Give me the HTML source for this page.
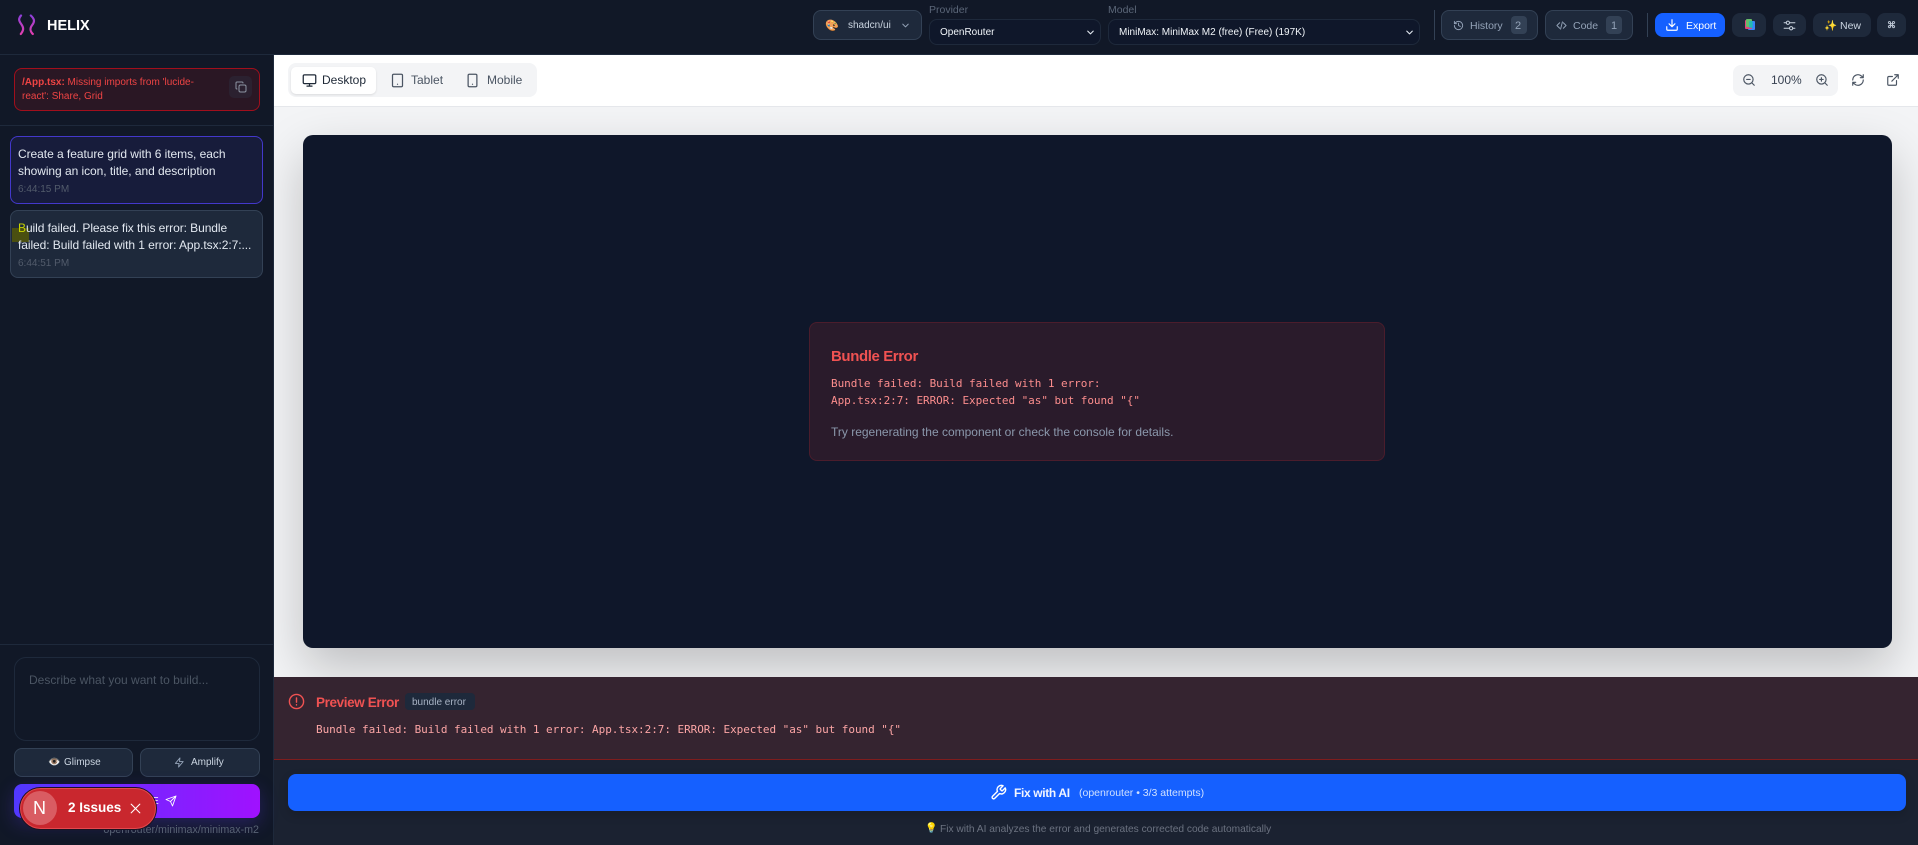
<!DOCTYPE html>
<html><head><meta charset="utf-8"><style>
*{box-sizing:border-box;margin:0;padding:0}
html,body{width:1918px;height:845px;overflow:hidden;background:#0f172a;font-family:"Liberation Sans",sans-serif}
.a{position:absolute;white-space:nowrap}
.b{position:absolute;border-radius:8px}
svg{position:absolute;fill:none;stroke:currentColor;stroke-width:2;stroke-linecap:round;stroke-linejoin:round}
.m{font-family:"DejaVu Sans Mono","Liberation Mono",monospace;font-size:11px;letter-spacing:-.05px}
</style></head><body>
<!-- main canvas -->
<div class="b" style="left:274px;top:55px;width:1644px;height:51px;background:#fff;border-radius:0"></div>
<div class="b" style="left:274px;top:106px;width:1644px;height:1px;background:#e5e7eb;border-radius:0"></div>
<div class="b" style="left:274px;top:107px;width:1644px;height:570px;background:#f3f4f6;border-radius:0;overflow:hidden">
 <div class="b" style="left:29px;top:28px;width:1589px;height:513px;background:#0f172a;border-radius:10px;box-shadow:0 20px 50px rgba(0,0,0,.22)"></div>
</div>
<!-- error card -->
<div class="b" style="left:809px;top:322px;width:576px;height:139px;background:#2a1b2b;border:1px solid #4b1d2c"></div>
<div class="a" style="left:831px;top:347px;font-size:15px;line-height:20px;font-weight:700;color:#f05252;letter-spacing:-.4px">Bundle Error</div>
<div class="a m" style="left:831px;top:375px;line-height:17px;color:#fc8d8d">Bundle failed: Build failed with 1 error:</div>
<div class="a m" style="left:831px;top:392px;line-height:17px;color:#fc8d8d">App.tsx:2:7: ERROR: Expected "as" but found "{"</div>
<div class="a" style="left:831px;top:423px;font-size:12px;line-height:18px;color:#8b98ac">Try regenerating the component or check the console for details.</div>
<!-- preview error -->
<div class="b" style="left:274px;top:677px;width:1644px;height:83px;background:#352430;border-bottom:1px solid #7f1d1d;border-radius:0"></div>
<svg style="left:288px;top:693px;color:#f05252" width="17" height="17" viewBox="0 0 24 24"><circle cx="12" cy="12" r="10"/><path d="M12 7v6M12 16.5v.5"/></svg>
<div class="a" style="left:316px;top:693px;font-size:13.5px;line-height:20px;font-weight:700;color:#f05252;letter-spacing:-.38px">Preview Error</div>
<div class="b" style="left:405px;top:693px;width:70px;height:17px;background:#1e293b;border-radius:4px"></div>
<div class="a" style="left:412px;top:694px;font-size:10px;line-height:17px;color:#a8b3c4">bundle error</div>
<div class="a m" style="left:316px;top:721px;line-height:17px;color:#fca5a5">Bundle failed: Build failed with 1 error: App.tsx:2:7: ERROR: Expected "as" but found "{"</div>
<!-- fix bar -->
<div class="b" style="left:274px;top:760px;width:1644px;height:85px;background:#1b2231;border-radius:0"></div>
<div class="b" style="left:288px;top:774px;width:1618px;height:37px;background:#1560ff;box-shadow:0 4px 10px rgba(0,0,0,.15)"></div>
<svg style="left:990px;top:784px;color:#fff" width="17" height="17" viewBox="0 0 24 24"><path d="M14.7 6.3a1 1 0 0 0 0 1.4l1.6 1.6a1 1 0 0 0 1.4 0l3.77-3.77a6 6 0 0 1-7.94 7.94l-6.91 6.91a2.12 2.12 0 0 1-3-3l6.91-6.91a6 6 0 0 1 7.94-7.94z"/></svg>
<div class="a" style="left:1014px;top:783px;font-size:12px;line-height:20px;font-weight:700;color:#f1f5ff;letter-spacing:-.35px">Fix with AI</div>
<div class="a" style="left:1079px;top:784px;font-size:10.5px;line-height:18px;color:#cfe0ff">(openrouter • 3/3 attempts)</div>
<div class="a" style="left:925px;top:821px;font-size:10px;line-height:16px">💡</div>
<div class="a" style="left:940px;top:822px;font-size:10.2px;line-height:16px;color:#6b7280">Fix with AI analyzes the error and generates corrected code automatically</div>
<!-- header -->
<div class="b" style="left:0;top:0;width:1918px;height:55px;background:#111827;border-bottom:1px solid #1e293b;border-radius:0"></div>
<svg style="left:17px;top:14px;stroke-width:2.2" width="20" height="22" viewBox="0 0 20 22"><defs><linearGradient id="g" gradientUnits="userSpaceOnUse" x1="0" y1="1" x2="0" y2="20"><stop offset="0" stop-color="#8b3fd9"/><stop offset="1" stop-color="#e23fb0"/></linearGradient></defs><path stroke="url(#g)" d="M4 1.5C1 5 2 7 4.5 10.5C7 14 6.5 16.5 3.8 20M13.8 1.5C17.5 5 18 7.5 15.2 11C12.5 14.5 13 17 15.8 20"/></svg>
<div class="a" style="left:47px;top:16px;font-size:14.5px;line-height:20px;font-weight:700;color:#fff">HELIX</div>
<div class="b" style="left:813px;top:10px;width:109px;height:30px;background:#1e293b;border:1px solid #334155;border-radius:8px"></div>
<div class="a" style="left:825px;top:18px;font-size:11px;line-height:16px">🎨</div>
<div class="a" style="left:848px;top:18px;font-size:10px;line-height:16px;color:#cbd5e1">shadcn/ui</div>
<svg style="left:900px;top:20px;color:#94a3b8" width="11" height="11" viewBox="0 0 24 24"><path d="M6 9l6 6 6-6"/></svg>
<div class="a" style="left:929px;top:3px;font-size:10.5px;line-height:14px;color:#5b6678">Provider</div>
<div class="b" style="left:929px;top:19px;width:172px;height:26px;background:#0f172a;border:1px solid #1e293b"></div>
<div class="a" style="left:940px;top:25px;font-size:10px;line-height:16px;color:#f1f5f9">OpenRouter</div>
<svg style="left:1085px;top:27px;color:#e2e8f0;stroke-width:2.4" width="11" height="11" viewBox="0 0 24 24"><path d="M6 9l6 6 6-6"/></svg>
<div class="a" style="left:1108px;top:3px;font-size:10.5px;line-height:14px;color:#5b6678">Model</div>
<div class="b" style="left:1108px;top:19px;width:312px;height:26px;background:#0f172a;border:1px solid #1e293b"></div>
<div class="a" style="left:1119px;top:25px;font-size:10px;line-height:16px;color:#f1f5f9">MiniMax: MiniMax M2 (free) (Free) (197K)</div>
<svg style="left:1404px;top:27px;color:#e2e8f0;stroke-width:2.4" width="11" height="11" viewBox="0 0 24 24"><path d="M6 9l6 6 6-6"/></svg>
<div class="b" style="left:1434px;top:10px;width:1px;height:30px;background:#334155;border-radius:0"></div>
<div class="b" style="left:1441px;top:10px;width:97px;height:30px;background:#1e293b;border:1px solid #334155"></div>
<svg style="left:1453px;top:20px;color:#94a3b8" width="11" height="11" viewBox="0 0 24 24"><path d="M3 12a9 9 0 1 0 3-6.7L3 8M3 3v5h5M12 7v5l4 2"/></svg>
<div class="a" style="left:1470px;top:18px;font-size:10.5px;line-height:16px;color:#94a3b8">History</div>
<div class="b" style="left:1511px;top:16px;width:16px;height:18px;background:#334155;border-radius:4px"></div>
<div class="a" style="left:1515px;top:18px;font-size:11px;line-height:16px;color:#94a3b8">2</div>
<div class="b" style="left:1545px;top:10px;width:88px;height:30px;background:#1e293b;border:1px solid #334155"></div>
<svg style="left:1556px;top:20px;color:#94a3b8" width="11" height="11" viewBox="0 0 24 24"><path d="M8 6l-6 6 6 6M16 6l6 6-6 6M14 4l-4 16"/></svg>
<div class="a" style="left:1573px;top:18px;font-size:10.5px;line-height:16px;color:#94a3b8">Code</div>
<div class="b" style="left:1606px;top:16px;width:16px;height:18px;background:#334155;border-radius:4px"></div>
<div class="a" style="left:1611px;top:18px;font-size:11px;line-height:16px;color:#94a3b8">1</div>
<div class="b" style="left:1647px;top:13px;width:1px;height:24px;background:#334155;border-radius:0"></div>
<div class="b" style="left:1655px;top:13px;width:70px;height:24px;background:#1560ff"></div>
<svg style="left:1665px;top:18px;color:#fff" width="14" height="14" viewBox="0 0 24 24"><path d="M21 15v4a2 2 0 0 1-2 2H5a2 2 0 0 1-2-2v-4M7 10l5 5 5-5M12 15V3"/></svg>
<div class="a" style="left:1686px;top:18px;font-size:10.5px;line-height:16px;font-weight:400;color:#fff">Export</div>
<div class="b" style="left:1732px;top:13px;width:34px;height:24px;background:#1e293b"></div>
<div class="b" style="left:1748px;top:21px;width:7px;height:9px;background:#3b82f6;border-radius:1px"></div>
<div class="b" style="left:1745px;top:20px;width:7px;height:9px;background:#e0457b;border-radius:1px"></div>
<div class="b" style="left:1746px;top:19px;width:6px;height:8px;background:#66bb6a;border-radius:1px"></div>
<div class="b" style="left:1749px;top:21px;width:4px;height:7px;background:#14b8c4;border-radius:1px;opacity:.75"></div>
<div class="b" style="left:1773px;top:14px;width:33px;height:22px;background:#1e293b"></div>
<svg style="left:1783px;top:19px;color:#cbd5e1;stroke-width:1.8" width="13" height="13" viewBox="0 0 24 24"><path d="M2 7h4M12 7h10M2 17h10M18 17h4"/><circle cx="9" cy="7" r="3"/><circle cx="15" cy="17" r="3"/></svg>
<div class="b" style="left:1813px;top:13px;width:58px;height:24px;background:#1e293b"></div>
<div class="a" style="left:1824px;top:18px;font-size:10.5px;line-height:16px">✨</div>
<div class="a" style="left:1840px;top:18px;font-size:10.5px;line-height:16px;color:#cbd5e1">New</div>
<div class="b" style="left:1877px;top:13px;width:29px;height:24px;background:#1e293b"></div>
<div class="a" style="left:1887px;top:17px;font-size:9px;line-height:16px;font-weight:700;color:#b8c2d0">⌘</div>
<!-- sidebar -->
<div class="b" style="left:0;top:55px;width:274px;height:790px;background:#111827;border-right:1px solid #1e293b;border-radius:0"></div>
<div class="b" style="left:14px;top:68px;width:246px;height:43px;background:#2a1724;border:1px solid #a10f1c"></div>
<div class="a" style="left:22px;top:76px;font-size:10px;line-height:14px;color:#ef4444;white-space:pre"><b>/App.tsx:</b> Missing imports from 'lucide-
react': Share, Grid</div>
<div class="b" style="left:229px;top:76px;width:23px;height:22px;background:#2b2130;border-radius:5px"></div>
<svg style="left:235px;top:81px;color:#8d95a3;stroke-width:2" width="12" height="12" viewBox="0 0 24 24"><rect x="8" y="8" width="14" height="14" rx="3"/><path d="M4 16c-1 0-2-1-2-2V4c0-1 1-2 2-2h10c1 0 2 1 2 2"/></svg>
<div class="b" style="left:0;top:125px;width:273px;height:1px;background:#1e293b;border-radius:0"></div>
<div class="b" style="left:10px;top:136px;width:253px;height:68px;background:#171c3b;border:1px solid #4338ca"></div>
<div class="a" style="left:18px;top:146px;font-size:12px;line-height:17px;color:#e2e8f0;white-space:pre;letter-spacing:-.05px">Create a feature grid with 6 items, each
showing an icon, title, and description</div>
<div class="a" style="left:18px;top:183px;font-size:10px;line-height:14px;color:#525b6b">6:44:15 PM</div>
<div class="b" style="left:10px;top:210px;width:253px;height:68px;background:#1e293b;border:1px solid #334155"></div>
<div class="b" style="left:12px;top:228px;width:17px;height:14px;background:#4a4f10;border-radius:0"></div>
<div class="a" style="left:18px;top:220px;font-size:12px;line-height:17px;color:#e2e8f0;white-space:pre;letter-spacing:-.07px"><span style="color:#c8d400">B</span>uild failed. Please fix this error: Bundle
failed: Build failed with 1 error: App.tsx:2:7:...</div>
<div class="a" style="left:18px;top:257px;font-size:10px;line-height:14px;color:#525b6b">6:44:51 PM</div>
<div class="b" style="left:0;top:644px;width:273px;height:1px;background:#1e293b;border-radius:0"></div>
<div class="b" style="left:14px;top:657px;width:246px;height:84px;background:#111827;border:1px solid #1e293b;border-radius:12px"></div>
<div class="a" style="left:29px;top:672px;font-size:12px;line-height:16px;color:#4b5563">Describe what you want to build...</div>
<div class="b" style="left:14px;top:748px;width:119px;height:29px;background:#1e293b;border:1px solid #334155"></div>
<div class="a" style="left:48px;top:755px;font-size:10px;line-height:16px">👁️</div>
<div class="a" style="left:64px;top:755px;font-size:10px;line-height:16px;color:#cbd5e1">Glimpse</div>
<div class="b" style="left:140px;top:748px;width:120px;height:29px;background:#1e293b;border:1px solid #334155"></div>
<svg style="left:174px;top:757px;color:#94a3b8" width="11" height="11" viewBox="0 0 24 24"><path d="M13 2L3 14h8l-1 8 10-12h-8z"/></svg>
<div class="a" style="left:191px;top:755px;font-size:10px;line-height:16px;color:#cbd5e1">Amplify</div>
<div class="b" style="left:14px;top:784px;width:246px;height:34px;background:linear-gradient(90deg,#5138ff,#a011ff);box-shadow:0 6px 18px rgba(99,60,255,.25)"></div>
<svg style="left:165px;top:795px;color:#fff;stroke-width:1.8" width="12" height="12" viewBox="0 0 24 24"><path d="M22 2L11 13M22 2l-7 20-4-9-9-4z"/></svg>
<div class="a" style="left:152px;top:796px;font-size:10px;line-height:12px;color:#fff">E</div>
<div class="a" style="left:100px;top:823px;width:159px;text-align:right;font-size:10.7px;line-height:14px;color:#586274">openrouter/minimax/minimax-m2</div>
<!-- next badge -->
<div class="b" style="left:20px;top:788px;width:136px;height:41px;background:#c9272e;border:1px solid #e4484e;border-radius:21px;box-shadow:0 0 0 1px #1c1220"></div>
<div class="b" style="left:23px;top:791px;width:34px;height:34px;background:#d95c62;border-radius:50%"></div>
<div class="a" style="left:33px;top:797px;font-size:18px;line-height:22px;color:#fff">N</div>
<div class="a" style="left:68px;top:799px;font-size:13.5px;line-height:18px;font-weight:700;color:#fff">2 Issues</div>
<svg style="left:129px;top:802px;color:#fff;stroke-width:2" width="13" height="13" viewBox="0 0 24 24"><path d="M4 4l16 16M20 4L4 20"/></svg>
<!-- toolbar -->
<div class="b" style="left:288px;top:63px;width:249px;height:34px;background:#f3f4f6;border-radius:8px"></div>
<div class="b" style="left:291px;top:67px;width:85px;height:27px;background:#fff;border-radius:5px;box-shadow:0 1px 2px rgba(0,0,0,.1)"></div>
<svg style="left:302px;top:73px;color:#1f2937" width="15" height="15" viewBox="0 0 24 24"><rect x="2" y="3" width="20" height="14" rx="2"/><path d="M8 21h8M12 17v4"/></svg>
<div class="a" style="left:322px;top:72px;font-size:12px;line-height:17px;color:#1f2937">Desktop</div>
<svg style="left:390px;top:73px;color:#4b5563" width="15" height="15" viewBox="0 0 24 24"><rect x="4" y="2" width="16" height="20" rx="2"/><path d="M12 18h.01"/></svg>
<div class="a" style="left:411px;top:72px;font-size:12px;line-height:17px;color:#4b5563">Tablet</div>
<svg style="left:465px;top:73px;color:#4b5563" width="15" height="15" viewBox="0 0 24 24"><rect x="5" y="2" width="14" height="20" rx="2"/><path d="M12 18h.01"/></svg>
<div class="a" style="left:487px;top:72px;font-size:12px;line-height:17px;color:#4b5563">Mobile</div>
<div class="b" style="left:1733px;top:65px;width:105px;height:31px;background:#f3f4f6"></div>
<svg style="left:1742px;top:73px;color:#4b5563" width="14" height="14" viewBox="0 0 24 24"><circle cx="11" cy="11" r="8"/><path d="M21 21l-4.3-4.3M8 11h6"/></svg>
<div class="a" style="left:1771px;top:72px;font-size:12px;line-height:17px;color:#374151">100%</div>
<svg style="left:1815px;top:73px;color:#4b5563" width="14" height="14" viewBox="0 0 24 24"><circle cx="11" cy="11" r="8"/><path d="M21 21l-4.3-4.3M8 11h6M11 8v6"/></svg>
<svg style="left:1851px;top:73px;color:#4b5563" width="14" height="14" viewBox="0 0 24 24"><path d="M3 12a9 9 0 0 1 15-6.7L21 8M21 3v5h-5M21 12a9 9 0 0 1-15 6.7L3 16M3 21v-5h5"/></svg>
<svg style="left:1886px;top:73px;color:#4b5563" width="14" height="14" viewBox="0 0 24 24"><path d="M18 13v6a2 2 0 0 1-2 2H5a2 2 0 0 1-2-2V8a2 2 0 0 1 2-2h6M15 3h6v6M10 14L21 3"/></svg>
</body></html>
